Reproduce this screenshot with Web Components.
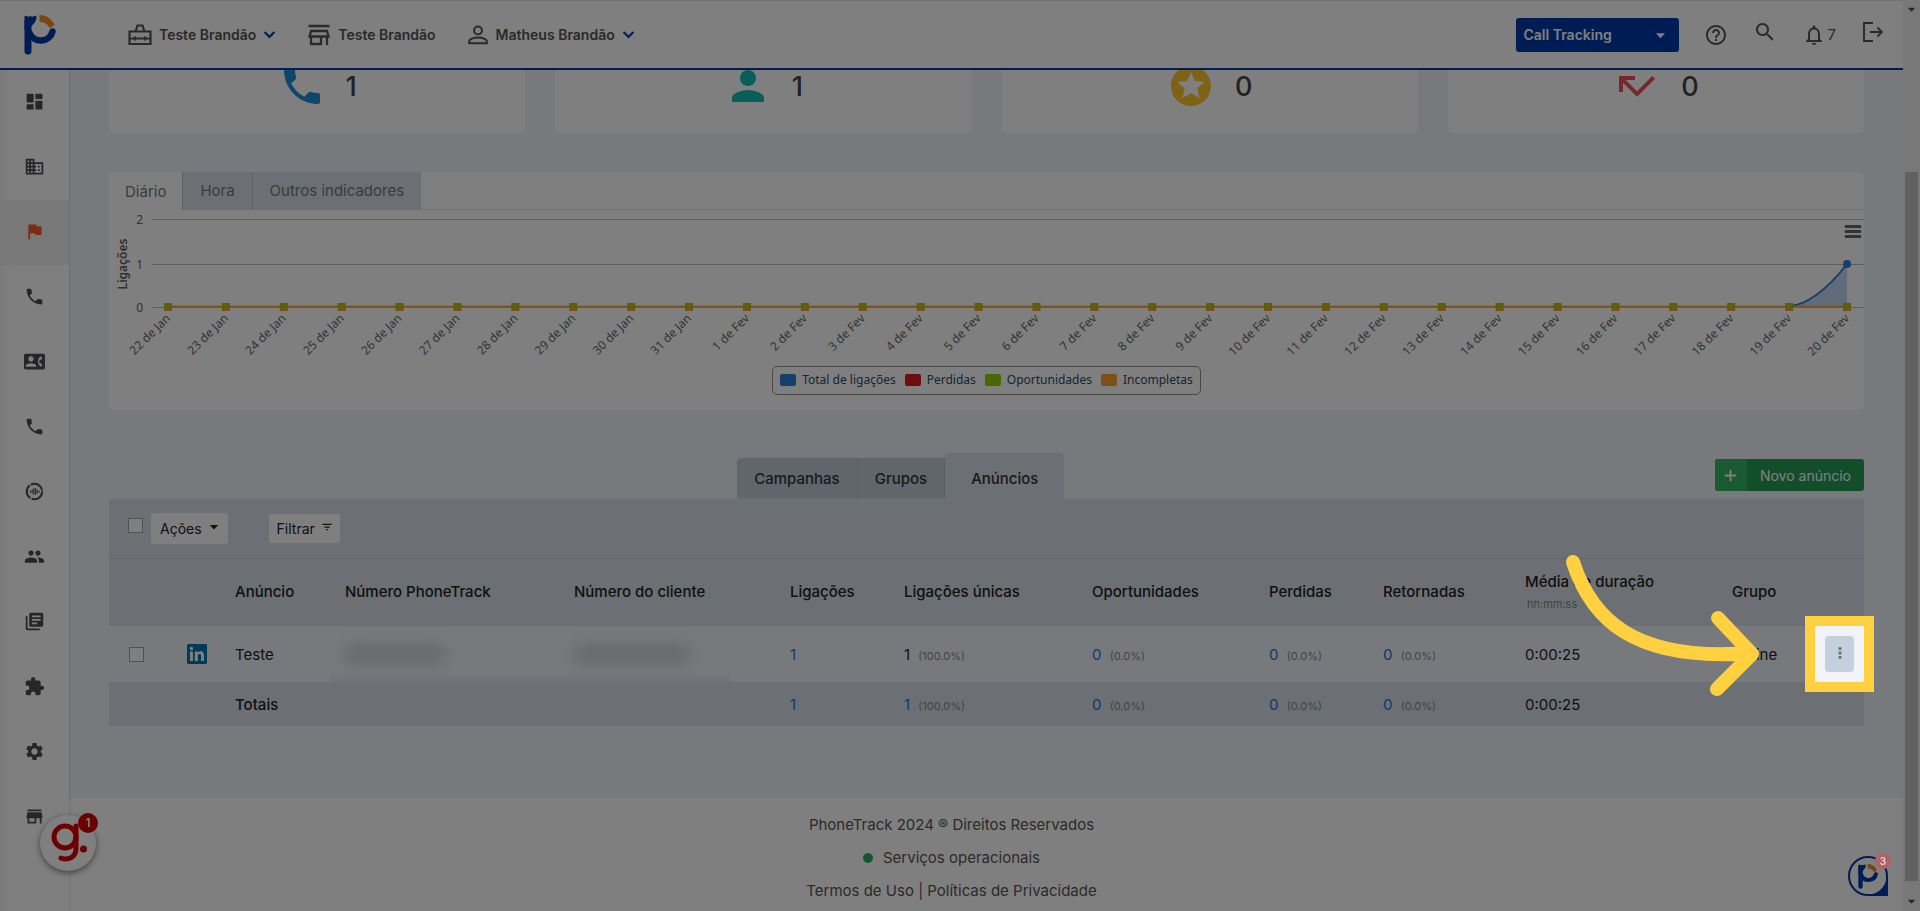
<!DOCTYPE html>
<html lang="pt-BR">
<head>
<meta charset="utf-8">
<title>PhoneTrack</title>
<style>
  html, body { margin: 0; }
  body {
    --blue: #0039ab;
    --panel: #d8dfe6;
    --bg: #f1f3f9;
    --rail: 69px;
    --bar: 17px;
    font-family: Inter, "Noto Sans", sans-serif;
    font-size: 15px;
    color: #222;
    background: var(--bg);
  }
  app-shell { min-height: 100vh; }
</style>
</head>
<body>
<app-shell></app-shell>
<script>
const ICONS = {
  dashboard: '<path d="M3 13h8V3H3v10zm0 8h8v-6H3v6zm10 0h8V11h-8v10zm0-18v6h8V3h-8z"/>',
  business: '<path d="M12 7V3H2v18h20V7H12zM6 19H4v-2h2v2zm0-4H4v-2h2v2zm0-4H4V9h2v2zm0-4H4V5h2v2zm4 12H8v-2h2v2zm0-4H8v-2h2v2zm0-4H8V9h2v2zm0-4H8V5h2v2zm10 12h-8v-2h2v-2h-2v-2h2v-2h-2V9h8v10zm-2-8h-2v2h2v-2zm0 4h-2v2h2v-2z"/>',
  flag: '<path d="M14.4 6L14 4H5v17h2v-7h5.6l.4 2h7V6z"/>',
  phone: '<path d="M6.62 10.79c1.44 2.83 3.76 5.14 6.59 6.59l2.2-2.2c.27-.27.67-.36 1.02-.24 1.12.37 2.33.57 3.57.57.55 0 1 .45 1 1V20c0 .55-.45 1-1 1-9.39 0-17-7.61-17-17 0-.55.45-1 1-1h3.5c.55 0 1 .45 1 1 0 1.25.2 2.45.57 3.57.11.35.03.74-.25 1.02l-2.2 2.2z"/>',
  contact: '<path d="M22 3H2C.9 3 0 3.9 0 5v14c0 1.1.9 2 2 2h20c1.1 0 1.99-.9 1.99-2L24 5c0-1.1-.9-2-2-2zM8 6c1.66 0 3 1.34 3 3s-1.34 3-3 3-3-1.34-3-3 1.34-3 3-3zm6 12H2v-1c0-2 4-3.1 6-3.1s6 1.1 6 3.1v1zm3.85-4h1.64L21 16l-1.99 1.99c-1.31-.98-2.28-2.38-2.73-3.99-.18-.64-.28-1.31-.28-2s.1-1.36.28-2c.45-1.62 1.42-3.01 2.73-3.99L21 8l-1.51 2h-1.64c-.22.63-.35 1.3-.35 2s.13 1.37.35 2z"/>',
  voice: '<circle cx="12" cy="12" r="8.8" fill="none" stroke="currentColor" stroke-width="2.4" stroke-dasharray="17 1.400"/><path d="M6.5 11h1.4v2H6.5zM8.6 9.6H10v4.8H8.6zM10.7 8.4h1.2v7.2h-1.2zM12.600 8.400h1.200v7.200h-1.200zM14.500 9.600h1.300v4.800h-1.300zM16.500 11h1.400v2h-1.400z"/>',
  group: '<path d="M16 11c1.66 0 2.99-1.34 2.99-3S17.66 5 16 5c-1.66 0-3 1.34-3 3s1.34 3 3 3zm-8 0c1.66 0 2.99-1.34 2.99-3S9.66 5 8 5C6.34 5 5 6.34 5 8s1.34 3 3 3zm0 2c-2.33 0-7 1.17-7 3.5V19h14v-2.5c0-2.33-4.67-3.5-7-3.5zm8 0c-.29 0-.62.02-.97.05 1.16.84 1.97 1.97 1.97 3.45V19h6v-2.5c0-2.33-4.67-3.5-7-3.5z"/>',
  library: '<path d="M4 6H2v14c0 1.100.9 2 2 2h14v-2H4V6zm16-4H8c-1.100 0-2 .9-2 2v12c0 1.100.9 2 2 2h12c1.100 0 2-.9 2-2V4c0-1.100-.9-2-2-2zm-1 9H9V9h10v2zm-4 4H9v-2h6v2zm4-8H9V5h10v2z"/>',
  extension: '<path d="M20.500 11H19V7c0-1.100-.9-2-2-2h-4V3.500C13 2.120 11.880 1 10.500 1S8 2.120 8 3.500V5H4c-1.100 0-1.990.9-1.990 2v3.800H3.500c1.490 0 2.700 1.210 2.700 2.700s-1.210 2.700-2.700 2.700H2V20c0 1.100.9 2 2 2h3.800v-1.500c0-1.490 1.210-2.700 2.700-2.700 1.490 0 2.700 1.210 2.700 2.700V22H17c1.100 0 2-.9 2-2v-4h1.500c1.380 0 2.500-1.120 2.500-2.500S21.880 11 20.500 11z"/>',
  settings: '<path d="M19.14 12.94c.04-.3.06-.61.06-.94 0-.32-.02-.64-.07-.94l2.03-1.58c.18-.14.23-.41.12-.61l-1.92-3.32c-.12-.22-.37-.29-.59-.22l-2.39.96c-.5-.38-1.03-.7-1.62-.94l-.36-2.54c-.04-.24-.24-.41-.48-.41h-3.84c-.24 0-.43.17-.47.41l-.36 2.54c-.59.24-1.13.57-1.62.94l-2.39-.96c-.22-.08-.47 0-.59.22L2.74 8.87c-.12.21-.08.47.12.61l2.03 1.58c-.05.3-.09.63-.09.94s.02.64.07.94l-2.03 1.58c-.18.14-.23.41-.12.61l1.92 3.32c.12.22.37.29.59.22l2.39-.96c.5.38 1.03.7 1.62.94l.36 2.54c.05.24.24.41.48.41h3.84c.24 0 .44-.17.47-.41l.36-2.54c.59-.24 1.13-.56 1.62-.94l2.39.96c.22.08.47 0 .59-.22l1.92-3.32c.12-.22.07-.47-.12-.61l-2.01-1.58zM12 15.6c-1.98 0-3.6-1.62-3.6-3.6s1.62-3.6 3.6-3.6 3.600 1.620 3.600 3.600-1.620 3.600-3.600 3.600z"/>',
  store: '<path d="M20 4H4v2h16V4zm1 10v-2l-1-5H4l-1 5v2h1v6h10v-6h4v6h2v-6h1zm-9 4H6v-4h6v4z"/>',
  person: '<path d="M12 12c2.210 0 4-1.790 4-4s-1.790-4-4-4-4 1.790-4 4 1.790 4 4 4zm0 2c-2.670 0-8 1.340-8 4v2h16v-2c0-2.660-5.330-4-8-4z"/>',
  stars: '<path d="M11.990 2C6.470 2 2 6.480 2 12s4.470 10 9.990 10C17.520 22 22 17.520 22 12S17.520 2 11.990 2zm4.240 16L12 15.450 7.770 18l1.120-4.810-3.730-3.230 4.920-.42L12 5l1.920 4.530 4.920.42-3.730 3.230L16.230 18z"/>',
  missed: '<path d="M19.590 7L12 14.590 6.410 9H11V7H3v8h2v-4.590l7 7 9-9z"/>',
  help: '<path d="M11 18h2v-2h-2v2zm1-16C6.480 2 2 6.480 2 12s4.480 10 10 10 10-4.480 10-10S17.520 2 12 2zm0 18c-4.410 0-8-3.590-8-8s3.590-8 8-8 8 3.590 8 8-3.590 8-8 8zm0-14c-2.210 0-4 1.790-4 4h2c0-1.100.9-2 2-2s2 .9 2 2c0 2-3 1.750-3 5h2c0-2.250 3-2.500 3-5 0-2.210-1.790-4-4-4z"/>',
  search: '<path d="M15.500 14h-.79l-.28-.27C15.410 12.590 16 11.110 16 9.500 16 5.910 13.090 3 9.500 3S3 5.910 3 9.500 5.910 16 9.500 16c1.610 0 3.090-.59 4.230-1.570l.27.28v.79l5 4.990L20.490 19l-4.990-5zm-6 0C7.010 14 5 11.990 5 9.500S7.010 5 9.500 5 14 7.010 14 9.500 11.990 14 9.500 14z"/>',
  bell: '<path d="M12 22c1.100 0 2-.9 2-2h-4c0 1.100.9 2 2 2zm6-6v-5c0-3.070-1.630-5.640-4.500-6.320V4c0-.83-.67-1.500-1.500-1.500s-1.500.67-1.500 1.500v.68C7.640 5.360 6 7.920 6 11v5l-2 2v1h16v-1l-2-2zm-2 1H8v-6c0-2.480 1.510-4.500 4-4.500s4 2.020 4 4.500v6z"/>',
  exit: '<path d="M12 3H3v18h9M9 12h12M16.500 7.500L21 12l-4.500 4.500" fill="none" stroke="currentColor" stroke-width="1.900"/>',
  toolbox: '<path d="M1.500 8.500h21V21h-21zM7.500 8.500l2-6h5l2 6M2 15.500h20M7 13.500v4M17 13.500v4" fill="none" stroke="currentColor" stroke-width="2.200"/>',
  shop: '<path d="M1.500 3h21M4 8h16l1.500 5.500h-19zM4 13.500V21h10v-7.500M20 13.500V22" fill="none" stroke="currentColor" stroke-width="2.300"/>',
  user: '<circle cx="12" cy="7" r="4.300" fill="none" stroke="currentColor" stroke-width="2.200"/><path d="M2.300 21v-1.500c0-3 5-4.800 9.700-4.800s9.700 1.800 9.700 4.800V21z" fill="none" stroke="currentColor" stroke-width="2.200"/>',
  chevron: '<path d="M3 7.500l9 9 9-9" fill="none" stroke="currentColor" stroke-width="4"/>',
  caret: '<path d="M2 7h20L12 18z"/>',
  filter: '<path d="M1 4h22v3H1zM6 10.500h12v3H6zM10 17h4v3h-4z"/>',
  plus: '<path d="M12 3v18M3 12h18" stroke="currentColor" stroke-width="3"/>',
  dots: '<path d="M9.500 2h5v5h-5zM9.500 9.500h5v5h-5zM9.500 17h5v5h-5z"/>',
  linkedin: '<rect width="24" height="24" rx="1.500" fill="#0077b5"/><path fill="#fff" d="M3.600 9h3.500v11.400H3.600zM5.350 3.300a2.050 2.050 0 1 1 0 4.100 2.050 2.050 0 0 1 0-4.100zM9.300 9h3.400v1.600c.5-.9 1.600-1.900 3.400-1.900 3.600 0 4.300 2.400 4.300 5.500v6.200h-3.500v-5.500c0-1.300 0-3-1.800-3s-2.100 1.400-2.100 2.900v5.600H9.300z"/>',
};
const LOGO = '<path d="M4 6V36" stroke="#0039ab" stroke-width="7" stroke-linecap="round"/><path d="M.5 2c0-1 1-1.500 2-1 1.500 1 2.500 1 4 0 1.500 1 2.500 1 4 0 1-.5 2 0 2 1 0 4-2 6-5 9l-2 6-5-2z" fill="#0039ab"/><path d="M28.500 16.500A12 11.500 0 0 1 5.500 18" fill="none" stroke="#0039ab" stroke-width="6.500" stroke-linecap="round"/><path d="M15.500 0C22 0 28 4 30.500 10L25.500 13C23.500 9 20.500 7 15.500 7z" fill="#f58a1f"/>';

class BaseElement extends HTMLElement {
  constructor() { super(); this.attachShadow({ mode: 'open' }); }
  connectedCallback() {
    this.shadowRoot.innerHTML = `<style>*{box-sizing:border-box}button,select,input{font:inherit;color:inherit;margin:0}a{color:inherit;text-decoration:none}${this.css()}</style>${this.html()}`;
    this.ready();
  }
  css() { return ''; }
  html() { return '<slot></slot>'; }
  ready() {}
}

customElements.define('ui-icon', class extends BaseElement {
  css() { return ':host{display:inline-block;width:21px;height:21px;flex:none}svg{display:block;width:100%;height:100%;fill:currentColor}'; }
  html() { return `<svg viewBox="0 0 24 24" aria-hidden="true">${ICONS[this.getAttribute('name')]}</svg>`; }
});

customElements.define('brand-logo', class extends BaseElement {
  css() { return ':host{display:block;width:32px;height:40px}svg{display:block;width:100%;height:100%}'; }
  html() { return `<svg viewBox="0 0 32 40" role="img" aria-label="PhoneTrack">${LOGO}</svg>`; }
});

customElements.define('app-header', class extends BaseElement {
  css() { return `
    :host{position:fixed;z-index:10;top:0;left:0;right:var(--bar);height:70px;box-sizing:border-box;display:flex;align-items:center;justify-content:space-between;
      background:#fff;border-top:1px solid #e4e4e4;border-bottom:2px solid var(--blue);padding:0 18px 0 24px;color:#555}
    nav,.tools{display:flex;align-items:center}
    nav{font-size:14px;font-weight:600}
    nav a{display:flex;align-items:center;gap:7px}
    nav ui-icon{width:24px;height:24px}
    nav ui-icon[name=user]{width:22px}
    nav ui-icon[name=chevron]{width:13px;height:13px;color:var(--blue)}
    .links{display:flex;gap:31px;margin-left:72px}
    .product{position:relative;width:163px;height:34px;color:#fff}
    select{appearance:none;width:100%;height:100%;border:0;border-radius:3px;background:var(--blue);color:#fff;font-size:14px;font-weight:600;padding:0 8px}
    .product ui-icon{position:absolute;right:13px;top:12px;width:11px;height:11px;pointer-events:none}
    .tools{gap:25px}
    .tools button{display:flex;align-items:center;gap:2px;border:0;padding:0;background:none;font-size:15px}
    .tools button ui-icon{width:24px;height:24px}
    .up{padding-bottom:6px!important}`; }
  html() { return `
    <nav><brand-logo></brand-logo>
      <div class="links">
        <a href="#conta"><ui-icon name="toolbox"></ui-icon>Teste Brandão<ui-icon name="chevron"></ui-icon></a>
        <a href="#loja"><ui-icon name="shop"></ui-icon>Teste Brandão</a>
        <a href="#perfil"><ui-icon name="user"></ui-icon>Matheus Brandão<ui-icon name="chevron"></ui-icon></a>
      </div></nav>
    <div class="tools">
      <div class="product"><select aria-label="Produto"><option>Call Tracking</option></select><ui-icon name="caret"></ui-icon></div>
      <button aria-label="Ajuda"><ui-icon name="help"></ui-icon></button>
      <button class="up" aria-label="Buscar"><ui-icon name="search"></ui-icon></button>
      <button aria-label="Notificações"><ui-icon name="bell"></ui-icon>7</button>
      <button class="up" aria-label="Sair"><ui-icon name="exit"></ui-icon></button>
    </div>`; }
});

customElements.define('app-sidebar', class extends BaseElement {
  css() { return `
    :host{position:fixed;z-index:5;top:70px;left:0;bottom:0;width:var(--rail);overflow:hidden;background:linear-gradient(90deg,#f6f6f6,#fff 12px);box-shadow:0 0 3px rgba(0,0,0,.2);color:#4d4d52}
    nav{display:flex;flex-direction:column}
    a{display:flex;align-items:center;justify-content:center;height:65px;padding-bottom:2px}
    a.on{background:#f0f0f0;color:#f05a28}`; }
  html() {
    const items = [['dashboard','Painel'],['business','Empresa'],['flag','Campanhas'],['phone','Ligações'],['contact','Contatos'],['phone','Discador'],['voice','Voz'],['group','Usuários'],['library','Relatórios'],['extension','Integrações'],['settings','Configurações'],['store','Loja']];
    return `<nav>${items.map(([i, t]) => `<a href="#${i}" aria-label="${t}"${i === 'flag' ? ' class="on"' : ''}><ui-icon name="${i}"></ui-icon></a>`).join('')}</nav>`;
  }
});

customElements.define('kpi-card', class extends BaseElement {
  css() { return `
    :host{display:flex;align-items:center;justify-content:center;gap:20px;height:94px;background:#fff;border-radius:0 0 5px 5px;font-size:27px;font-weight:500;color:#444}
    ui-icon{width:48px;height:48px;color:var(--tone)}`; }
  html() { return `<ui-icon name="${this.getAttribute('icon')}"></ui-icon><span><slot></slot></span>`; }
});

customElements.define('line-chart', class extends BaseElement {
  css() { return `:host{display:block;height:154px}svg{display:block;width:100%;height:154px;font-family:"Noto Sans",sans-serif;font-size:12px;fill:#666}
    .title{font-weight:600;fill:#606060}`; }
  html() { return '<svg role="img" aria-label="Ligações por dia"></svg>'; }
  ready() { this.draw(); new ResizeObserver(() => this.draw()).observe(this); }
  draw() {
    const w = this.clientWidth, top = 9, mid = 54, base = 97, x0 = 59, x1 = w - 17, days = [];
    for (let d = 22; d <= 31; d++) days.push(d + ' de Jan');
    for (let d = 1; d <= 20; d++) days.push(d + ' de Fev');
    const step = (x1 - x0) / (days.length - 1);
    const grid = [[top, 2], [mid, 1], [base, 0]].map(([y, n]) => `<path d="M43 ${y + .5}H${w}" stroke="#bcbcbc"/><text x="34" y="${y + 5}" text-anchor="end">${n}</text>`).join('');
    const px = x1 - step;
    const marks = days.map((t, i) => {
      const x = x0 + step * i;
      return `<path d="M${x - 4} ${base - 4}h8v8h-8z" fill="#90d000"/><path d="M${x} ${base - 4}l4 8h-8z" fill="#f7a035"/>
        <text transform="translate(${x + 3} ${base + 12}) rotate(-45)" text-anchor="end">${t}</text>`;
    }).join('');
    this.shadowRoot.querySelector('svg').innerHTML = `${grid}
      <text class="title" transform="translate(18 54) rotate(-90)" text-anchor="middle">Ligações</text>
      <path d="M${px} ${base}C${px + 16} ${base} ${x1 - 20} ${mid + 26} ${x1} ${mid}V${base}z" fill="#2f7ed8" fill-opacity=".3"/>
      <path d="M${px} ${base - 1}C${px + 16} ${base - 1} ${x1 - 20} ${mid + 26} ${x1} ${mid}" fill="none" stroke="#2f7ed8" stroke-width="2"/>
      <circle cx="${x1}" cy="${mid}" r="4" fill="#2f7ed8"/>
      <path d="M${x0} ${base - .5}H${x1}" stroke="#f7a035" stroke-width="1.500"/>${marks}
      <path d="M${w - 18} 16.500h14m-14 5h14m-14 5h14" stroke="#666" stroke-width="3" stroke-linecap="round"/>`;
  }
});

customElements.define('chart-panel', class extends BaseElement {
  css() { return `
    :host{display:flex;flex-direction:column;height:238px;background:#fff;border-radius:5px;overflow:hidden}
    .tabs{display:flex;height:38px;border-bottom:1px solid #dedede}
    .tabs button{border:0;border-left:1px solid #b9c4cf;background:var(--panel);color:#777;font-size:15px;padding:0 17px}
    .tabs button.on{background:#fff;border-left:0;padding:0 16px;height:38px}
    ul{display:flex;align-items:center;gap:9px;align-self:center;list-style:none;margin:2px 0 0;padding:0 7px 2px;height:29px;border:1px solid #909090;border-radius:5px;font-family:"Noto Sans",sans-serif;font-size:12px;color:#274b6d}
    li{display:flex;align-items:center;gap:6px}
    li::before{content:"";width:16px;height:12px;border-radius:2px;background:var(--c)}`; }
  html() { return `
    <div class="tabs"><button class="on">Diário</button><button>Hora</button><button>Outros indicadores</button></div>
    <line-chart></line-chart>
    <ul><li style="--c:#2f7ed8">Total de ligações</li><li style="--c:#e01a1a">Perdidas</li><li style="--c:#90d000">Oportunidades</li><li style="--c:#f7a035">Incompletas</li></ul>`; }
});

customElements.define('section-tabs', class extends BaseElement {
  css() { return `
    :host{display:grid;grid-template-columns:11fr auto 14fr;align-items:end;height:46px;font-size:15px}
    .tabs{grid-column:2;display:flex;align-items:flex-end}
    .tabs button{height:41px;border:0;border-bottom:1px solid #d3dbe3;border-right:1px solid #b2c0cb;background:#c0ced9;font-weight:500;color:#333;padding:0 17px}
    .tabs button:first-child{border-radius:4px 0 0 0}
    .tabs .on{height:46px;padding:4px 26px 0;background:var(--panel);border:0;border-radius:4px 4px 0 0}
    .new{justify-self:end;align-self:start;margin-top:6px;display:flex;align-items:center;height:32px;border:0;padding:0;border-radius:3px;overflow:hidden;background:#279c57;color:#fff;font-size:14px}
    .new i{display:flex;align-items:center;justify-content:center;width:32px;height:32px;background:#35b562}
    .new ui-icon{width:15px;height:15px}
    .new span{padding:0 13px}`; }
  html() { return `<div class="tabs"><button>Campanhas</button><button>Grupos</button><button class="on">Anúncios</button></div>
    <button class="new"><i><ui-icon name="plus"></ui-icon></i><span>Novo anúncio</span></button>`; }
});

customElements.define('guide-spotlight', class extends BaseElement {
  css() { return `
    :host{position:absolute;z-index:100;inset:0;pointer-events:none;box-shadow:0 0 0 10px #ffd140,0 0 0 3000px rgba(0,0,0,.5)}
    svg{position:absolute;right:49px;top:-76px;width:260px;height:150px}`; }
  html() { return `<svg viewBox="0 0 260 150" fill="none" stroke="#ffd140" stroke-width="14" stroke-linecap="round" stroke-linejoin="round" aria-hidden="true"><path d="M18 12C36 68 78 112 195 103M163 68l34 36-35 35"/></svg>`; }
});

customElements.define('ads-table', class extends BaseElement {
  css() { return `
    :host{display:block}
    .bar{display:flex;align-items:center;height:60px;background:var(--panel);border-bottom:1px solid #c3cfd6;padding:0 19px}
    input{appearance:none;display:block;width:15px;height:15px;border:1px solid #a5a5a5;background:#fff}
    .bar input{margin:-7px 8px 0 0}
    .bar button{display:flex;align-items:center;gap:7px;height:31px;border:0;border-radius:3px;background:#fff;padding:0 9px;font-size:14px}
    .bar button+button{margin-left:41px;height:29px;padding:0 8px}
    .bar ui-icon{width:10px;height:10px;margin-top:-4px}
    table{width:100%;table-layout:fixed;border-collapse:collapse;font-size:15px}
    th,td{padding:0;text-align:left;font-weight:400;white-space:nowrap}
    thead th{height:67px;padding-bottom:3px;background:var(--panel);font-weight:500}
    tbody td{height:56px}
    tfoot th,tfoot td{height:44px;background:var(--panel)}
    tfoot th{font-weight:500}
    a{color:#1a73d9}
    small{font-size:11px;color:#888;margin-left:4px}
    thead small{display:block;margin:6px 2px 0;font-weight:400}
    .pick{padding-left:20px}
    td ui-icon{display:block;width:20px;height:20px}
    .act{position:relative}
    .act button{display:flex;align-items:center;justify-content:center;width:29px;height:36px;margin:0 10px;border:0;padding:0;border-radius:4px;background:#c3d0dd;color:#6a7180}
    .act ui-icon{width:14px;height:14px;margin-top:-2px}
    .masked{position:relative}
    .masked i{display:block;width:100px;height:18px;background:#cdcfd3;filter:blur(8px)}
    .masked i.wide{width:116px}
    .masked b{position:absolute;left:-14px;bottom:-4px;width:399px;height:14px;background:linear-gradient(#f1f3f9,#dde3ea 80%,#d8dfe6)}`; }
  html() {
    const widths = [78, 48, 110, 229, 216, 114, 188, 177, 114, 142, 207, 83, 49];
    const zero = '<td><a href="#ligacoes">0</a> <small>(0.0%)</small></td>';
    return `
    <div class="bar"><input type="checkbox" aria-label="Selecionar todos"><button>Ações<ui-icon name="caret"></ui-icon></button><button>Filtrar<ui-icon name="filter"></ui-icon></button></div>
    <table>
      <colgroup>${widths.map(w => `<col style="width:${w}px">`).join('')}</colgroup>
      <thead><tr><th></th><th></th><th>Anúncio</th><th>Número PhoneTrack</th><th>Número do cliente</th><th>Ligações</th><th>Ligações únicas</th><th>Oportunidades</th><th>Perdidas</th><th>Retornadas</th><th>Média de duração<small>hh:mm:ss</small></th><th>Grupo</th><th></th></tr></thead>
      <tbody><tr><td class="pick"><input type="checkbox" aria-label="Selecionar Teste"></td><td><ui-icon name="linkedin"></ui-icon></td><td>Teste</td><td class="masked"><b></b><i></i></td><td class="masked"><i class="wide"></i></td>
        <td><a href="#ligacoes">1</a></td><td>1 <small>(100.0%)</small></td>${zero}${zero}${zero}<td>0:00:25</td><td>Online</td>
        <td class="act"><button aria-label="Opções"><ui-icon name="dots"></ui-icon></button><guide-spotlight></guide-spotlight></td></tr></tbody>
      <tfoot><tr><td></td><td></td><th>Totais</th><td></td><td></td><td><a href="#ligacoes">1</a></td><td><a href="#ligacoes">1</a> <small>(100.0%)</small></td>${zero}${zero}${zero}<td>0:00:25</td><td></td><td></td></tr></tfoot>
    </table>`;
  }
});

customElements.define('app-footer', class extends BaseElement {
  css() { return `
    :host{display:flex;flex-direction:column;align-items:center;justify-content:center;height:113px;box-sizing:border-box;background:#fff;color:#555;font-size:15px;line-height:33px;padding-top:5px}
    p{margin:0}
    p:first-child{padding-right:10px}
    i{display:inline-block;width:10px;height:10px;border-radius:50%;background:#27ae60;margin-right:10px}`; }
  html() { return `<p>PhoneTrack 2024 ® Direitos Reservados</p><p><i></i>Serviços operacionais</p><p><a href="#termos">Termos de Uso</a> | <a href="#privacidade">Políticas de Privacidade</a></p>`; }
});

customElements.define('page-scrollbar', class extends BaseElement {
  css() { return `
    :host{position:fixed;z-index:20;top:0;right:0;bottom:0;width:var(--bar);display:flex;flex-direction:column;align-items:center;justify-content:space-between;background:#f1f1f1;padding:5px 0;box-sizing:border-box;color:#505050}
    ui-icon{width:9px;height:9px}
    ui-icon:first-child{rotate:180deg}
    i{flex:1;width:13px;background:#c1c1c1;margin:158px 0 16px}`; }
  html() { return '<ui-icon name="caret"></ui-icon><i></i><ui-icon name="caret"></ui-icon>'; }
});

customElements.define('guide-bubble', class extends BaseElement {
  css() { return `
    :host{position:fixed;z-index:30;left:40px;bottom:40px}
    button{position:relative;display:block;width:56px;height:56px;border:0;padding:0;border-radius:50%;background:#fff;box-shadow:0 2px 6px rgba(0,0,0,.5)}
    svg{display:block;width:56px;height:56px}
    span{position:absolute;right:-2px;top:-2px;width:20px;height:20px;border-radius:50%;background:#d60000;color:#fff;font-size:12px;font-weight:600;line-height:20px;text-align:center}`; }
  html() { return `<button aria-label="Guias"><svg viewBox="0 0 56 56" fill="none" stroke="#d60000" stroke-width="5" stroke-linecap="round" aria-hidden="true"><circle cx="25" cy="22" r="11"/><path d="M36 11v23c0 8-8 12-15 9"/><circle cx="43.500" cy="34" r="3.500" fill="#d60000" stroke="none"/></svg><span>1</span></button>`; }
});

customElements.define('chat-bubble', class extends BaseElement {
  css() { return `
    :host{position:fixed;z-index:30;right:32px;bottom:15px}
    button{display:block;width:40px;height:40px;border:2px solid var(--blue);padding:0;border-radius:50% 50% 0 50%;background:radial-gradient(circle,#fff 18px,var(--blue) 19px)}
    brand-logo{width:20px;height:25px;margin:0 auto}`; }
  html() { return '<button aria-label="Chat"><brand-logo></brand-logo></button>'; }
});

customElements.define('chat-badge', class extends BaseElement {
  css() { return ':host{position:fixed;z-index:110;right:29px;bottom:42px;width:16px;height:16px;border-radius:50%;background:#b06468;color:#e4dada;font-size:10px;font-weight:600;line-height:16px;text-align:center}'; }
});

customElements.define('app-shell', class extends BaseElement {
  css() { return `
    :host{display:flex;flex-direction:column;padding-right:var(--bar)}
    main{flex:1;padding:39px 39px 0 109px}
    .kpis{display:grid;grid-template-columns:repeat(4,1fr);gap:30px}
    chart-panel{margin-top:39px}
    section-tabs{margin-top:43px}`; }
  html() { return `
    <app-header></app-header>
    <app-sidebar></app-sidebar>
    <main>
      <div class="kpis">
        <kpi-card icon="phone" style="--tone:#1e8fd5">1</kpi-card>
        <kpi-card icon="person" style="--tone:#14bdb4">1</kpi-card>
        <kpi-card icon="stars" style="--tone:#fdc52c">0</kpi-card>
        <kpi-card icon="missed" style="--tone:#ef5058">0</kpi-card>
      </div>
      <chart-panel></chart-panel>
      <section-tabs></section-tabs>
      <ads-table></ads-table>
    </main>
    <app-footer></app-footer>
    <page-scrollbar></page-scrollbar>
    <guide-bubble></guide-bubble>
    <chat-bubble></chat-bubble>
    <chat-badge>3</chat-badge>`; }
});
</script>
</body>
</html>
